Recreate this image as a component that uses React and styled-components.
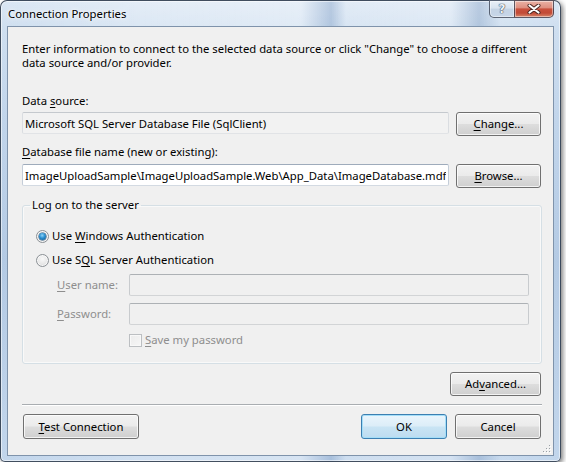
import React from "react";
import styled, { createGlobalStyle, css } from "styled-components";

const GlobalStyle = createGlobalStyle`
  html, body { margin: 0; padding: 0; background: #ffffff; }
  body {
    font-family: "Noto Sans", "Open Sans", sans-serif;
    font-size: 11.3px;
    color: #000;
  }
  * { box-sizing: border-box; }
`;

const Window = styled.div`
  position: relative;
  width: 561px;
  height: 462px;
  display: flex;
  flex-direction: column;
  border: 1px solid rgba(38, 50, 68, 0.85);
  border-radius: 7px 7px 5px 5px;
  box-shadow: inset 0 0 0 1px rgba(255, 255, 255, 0.55), 2px 2px 5px rgba(0, 0, 0, 0.5);
  background:
    linear-gradient(90deg,
      rgba(255,255,255,0) 0px,
      rgba(255,255,255,0.25) 140px,
      rgba(255,255,255,0.35) 300px,
      rgba(120,150,190,0.35) 330px,
      rgba(255,255,255,0.2) 345px,
      rgba(255,255,255,0.3) 450px,
      rgba(110,140,180,0.3) 478px,
      rgba(255,255,255,0.1) 500px,
      rgba(255,255,255,0) 561px),
    linear-gradient(180deg, #dbe7f4 0px, #cfdff0 26px, #c1d5eb 120px, #b3cae4 260px, #c2d6ec 462px);
`;

const TitleBar = styled.div`
  height: 25px;
  flex: none;
  display: flex;
  align-items: flex-start;
`;

const Title = styled.div`
  flex: 1;
  padding: 6px 0 0 7px;
  line-height: 14px;
  color: #000;
  white-space: nowrap;
  text-shadow: 0 0 6px rgba(255, 255, 255, 0.95), 0 0 3px rgba(255, 255, 255, 0.9);
`;

const CaptionGroup = styled.div`
  display: flex;
  margin: -1px 6px 0 0;
`;

const CaptionButton = styled.div`
  height: 18px;
  display: flex;
  align-items: center;
  justify-content: center;
  border: 1px solid rgba(58, 66, 84, 0.8);
  box-shadow: inset 0 0 0 1px rgba(255, 255, 255, 0.45);
  ${(p) =>
    p.$kind === "close"
      ? css`
          width: 40px;
          margin-left: -1px;
          border-radius: 0 0 5px 0;
          background: linear-gradient(180deg, #eab2a5 0%, #de8f80 42%, #c9503d 50%, #c24a36 75%, #d7866a 100%);
        `
      : css`
          width: 26px;
          border-radius: 0 0 0 5px;
          background: linear-gradient(180deg, #e9f0f8 0%, #d8e3ef 45%, #c4d3e4 50%, #c7d6e8 100%);
        `}
`;

const HelpGlyph = styled.span`
  font-family: "DejaVu Sans", sans-serif;
  font-weight: bold;
  font-size: 12px;
  line-height: 12px;
  color: #eef2f6;
  text-shadow: 0 0 1px #46505e, 0 0 1px #46505e, 0 0 1px #46505e;
  margin-top: -1px;
`;

const Client = styled.div`
  position: relative;
  flex: 1;
  margin: 0 6px 5px 6px;
  border: 1px solid #7f93ab;
  background: #f0f0f0;
  padding: 15px 11px 0 14px;
  display: flex;
  flex-direction: column;
`;

const Description = styled.p`
  margin: 0;
  line-height: 14px;
  white-space: nowrap;
`;

const Label = styled.div`
  line-height: 14px;
  white-space: nowrap;
  margin-top: ${(p) => p.$top || 0}px;
  color: ${(p) => (p.$disabled ? "#8e8e8e" : "#000")};
`;

const Key = styled.span`
  text-decoration: underline;
  text-underline-offset: 2px;
  text-decoration-thickness: 1px;
`;

const FieldRow = styled.div`
  display: flex;
  align-items: flex-start;
  gap: 7px;
  padding-right: 1px;
  margin-top: ${(p) => p.$top || 0}px;
`;

const variants = {
  readonly: css`
    background: #f2f2f2;
    border-color: #c5c9ce #dadde1 #e1e3e6 #dadde1;
  `,
  normal: css`
    background: #ffffff;
    border-color: #9eabbb #c4cdd8 #d3dae2 #c4cdd8;
  `,
  disabled: css`
    background: #f0f0f0;
    border-color: #adb1b5 #c8cbce #d2d4d6 #c8cbce;
  `,
};

const TextBox = styled.input`
  flex: 1;
  min-width: 0;
  height: 22px;
  margin: 0;
  padding: 0 2px;
  border: 1px solid;
  border-radius: 2px;
  font: inherit;
  color: #000;
  outline: none;
  ${(p) => variants[p.$variant || "normal"]}
`;

const Button = styled.button`
  flex: none;
  width: ${(p) => p.$width}px;
  height: ${(p) => p.$height || 24}px;
  margin: 0;
  padding: 0;
  font: inherit;
  line-height: 14px;
  color: #000;
  border-radius: 3px;
  border: 1px solid #707070;
  box-shadow: inset 0 0 0 1px rgba(255, 255, 255, 0.75);
  background: linear-gradient(180deg, #f2f2f2 0%, #ebebeb 48%, #dddddd 52%, #cfcfcf 100%);
  ${(p) =>
    p.$default &&
    css`
      border-color: #3c7fb1;
      box-shadow: inset 0 0 0 1px #a4def8;
      background: linear-gradient(180deg, #eaf5fc 0%, #dcedf8 48%, #c9e4f4 52%, #bddcf0 100%);
    `}
`;

const Group = styled.fieldset`
  margin: 10px 0 0 0;
  padding: 16px 12px 16px 13px;
  border: 1px solid #d5dfe5;
  border-radius: 3px;
  box-shadow: inset 0 0 0 1px rgba(255, 255, 255, 0.6);
  min-width: 0;
  display: flex;
  flex-direction: column;
`;

const Legend = styled.legend`
  margin-left: -6px;
  padding: 0 2px;
  line-height: 14px;
`;

const RadioRow = styled.label`
  display: flex;
  align-items: center;
  gap: 3px;
  height: 16px;
  line-height: 14px;
  margin-top: ${(p) => p.$top || 0}px;
`;

const Radio = styled.span`
  position: relative;
  flex: none;
  width: 13px;
  height: 13px;
  border-radius: 50%;
  border: 1px solid #8b9095;
  background: radial-gradient(circle at 50% 35%, #f9f9f9 0%, #e6e6e6 60%, #d0d0d0 100%);
  box-shadow: inset 0 0 0 1px rgba(255, 255, 255, 0.7);
  ${(p) =>
    p.$checked &&
    css`
      &::after {
        content: "";
        position: absolute;
        left: 2px;
        top: 2px;
        width: 7px;
        height: 7px;
        border-radius: 50%;
        background: radial-gradient(circle at 45% 35%, #8fd3f7 0%, #2a8fd0 45%, #0d4f86 100%);
        box-shadow: 0 0 0 0.5px #1b4f78;
      }
    `}
`;

const CredGrid = styled.div`
  display: grid;
  grid-template-columns: 72px 1fr;
  row-gap: 7px;
  align-items: center;
  margin-top: 6px;
  padding-left: 21px;
`;

const CheckRow = styled.label`
  display: flex;
  align-items: center;
  gap: 3px;
  height: 14px;
  line-height: 14px;
  margin: 8px 0 0 93px;
  color: #8e8e8e;
`;

const Checkbox = styled.span`
  flex: none;
  width: 13px;
  height: 13px;
  border: 1px solid #bcbfc2;
  background: linear-gradient(135deg, #ececec 0%, #f6f6f6 100%);
  box-shadow: inset 0 0 0 1px #f8f8f8;
`;

const ActionRow = styled.div`
  display: flex;
  align-items: flex-start;
  gap: 8px;
  padding: 0 1px;
  margin-top: ${(p) => p.$top || 0}px;
  justify-content: ${(p) => p.$justify || "flex-start"};
`;

const Spacer = styled.div`
  flex: 1;
`;

const Separator = styled.div`
  margin-top: 8px;
  height: 1px;
  background: #a9adb1;
  box-shadow: 0 1px 0 #ffffff;
`;

const Grip = styled.svg`
  position: absolute;
  right: 1px;
  bottom: 1px;
`;

function CloseGlyph() {
  return (
    <svg width="14" height="10" viewBox="0 0 14 10">
      <path d="M2.5 1.5 L11.5 8.5 M11.5 1.5 L2.5 8.5" stroke="#4a2520" strokeWidth="4" strokeLinecap="round" />
      <path d="M2.5 1.5 L11.5 8.5 M11.5 1.5 L2.5 8.5" stroke="#ffffff" strokeWidth="2.2" strokeLinecap="round" />
    </svg>
  );
}

function GripDots() {
  const dots = [
    [7, 1],
    [4, 4], [7, 4],
    [1, 7], [4, 7], [7, 7],
  ];
  return (
    <Grip width="10" height="10" viewBox="0 0 10 10">
      {dots.map(([x, y]) => (
        <g key={`${x}-${y}`}>
          <rect x={x + 1} y={y + 1} width="1" height="1" fill="#ffffff" />
          <rect x={x} y={y} width="1" height="1" fill="#9aa0a6" />
        </g>
      ))}
    </Grip>
  );
}

export default function App() {
  return (
    <>
      <GlobalStyle />
      <Window>
        <TitleBar>
          <Title>Connection Properties</Title>
          <CaptionGroup>
            <CaptionButton $kind="help">
              <HelpGlyph>?</HelpGlyph>
            </CaptionButton>
            <CaptionButton $kind="close">
              <CloseGlyph />
            </CaptionButton>
          </CaptionGroup>
        </TitleBar>
        <Client>
          <Description>
            Enter information to connect to the selected data source or click "Change" to choose a different
            <br />
            data source and/or provider.
          </Description>

          <Label $top={24}>
            Data <Key>s</Key>ource:
          </Label>
          <FieldRow $top={4}>
            <TextBox $variant="readonly" readOnly value="Microsoft SQL Server Database File (SqlClient)" />
            <Button $width={85}>
              <Key>C</Key>hange...
            </Button>
          </FieldRow>

          <Label $top={9}>
            <Key>D</Key>atabase file name (new or existing):
          </Label>
          <FieldRow $top={5}>
            <TextBox
              $variant="normal"
              readOnly
              value="ImageUploadSample\ImageUploadSample.Web\App_Data\ImageDatabase.mdf"
            />
            <Button $width={85}>
              <Key>B</Key>rowse...
            </Button>
          </FieldRow>

          <Group>
            <Legend>Log on to the server</Legend>
            <RadioRow>
              <Radio $checked />
              <span>
                Use <Key>W</Key>indows Authentication
              </span>
            </RadioRow>
            <RadioRow $top={8}>
              <Radio />
              <span>
                Use S<Key>Q</Key>L Server Authentication
              </span>
            </RadioRow>
            <CredGrid>
              <Label $disabled>
                <Key>U</Key>ser name:
              </Label>
              <TextBox $variant="disabled" disabled value="" />
              <Label $disabled>
                <Key>P</Key>assword:
              </Label>
              <TextBox $variant="disabled" disabled type="password" value="" />
            </CredGrid>
            <CheckRow>
              <Checkbox />
              <span>
                <Key>S</Key>ave my password
              </span>
            </CheckRow>
          </Group>

          <ActionRow $top={8} $justify="flex-end">
            <Button $width={91}>
              Ad<Key>v</Key>anced...
            </Button>
          </ActionRow>

          <Separator />

          <ActionRow $top={9}>
            <Button $width={116} $height={25}>
              <Key>T</Key>est Connection
            </Button>
            <Spacer />
            <Button $width={86} $height={25} $default>
              OK
            </Button>
            <Button $width={86} $height={25}>
              Cancel
            </Button>
          </ActionRow>

          <GripDots />
        </Client>
      </Window>
    </>
  );
}
